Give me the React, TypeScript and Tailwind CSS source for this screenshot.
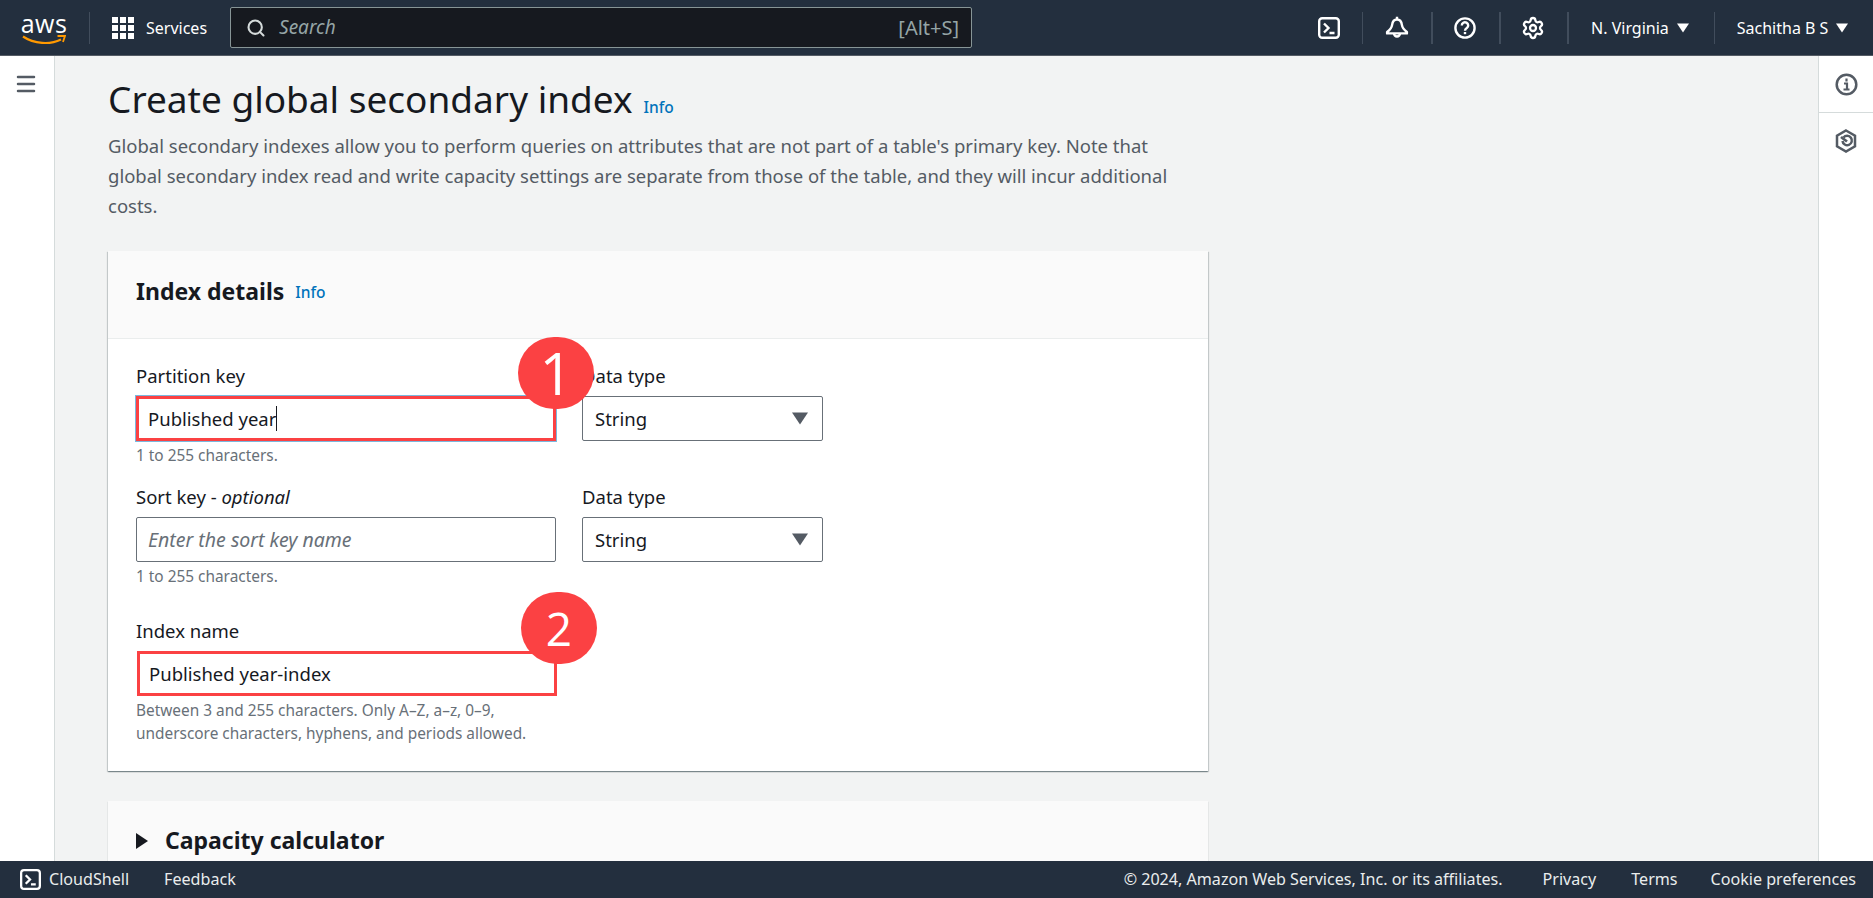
import type { ReactNode } from 'react'
import { Search, Settings, Menu } from 'lucide-react'

const font = { fontFamily: '"Noto Sans", Arial, sans-serif' }

function TerminalIcon({ size = 22 }: { size?: number }) {
  return (
    <svg width={size} height={size} viewBox="0 0 22 22" fill="none" stroke="#fff" strokeWidth="2.4">
      <rect x="1.200" y="1.200" width="19.600" height="19.600" rx="3" />
      <path d="M6 6.500 10.500 11 6 15.500M11.500 16H16.500" />
    </svg>
  )
}

function BellIcon() {
  return (
    <svg width="24" height="24" viewBox="0 0 24 24" fill="none" stroke="#fff" strokeWidth="2.4" strokeLinejoin="round">
      <path d="M12 3.500c-3.200 0-4.500 2.400-4.900 5.400-.4 2.800-1.900 4.900-5 7.100v1.400h19.800V16c-3.100-2.200-4.600-4.300-5-7.100-.4-3-1.700-5.400-4.900-5.400Z" />
      <path d="M12 .8v2.700M9 17.500a3 3 0 0 0 6 0" />
    </svg>
  )
}

function HelpIcon() {
  return (
    <svg width="22" height="22" viewBox="0 0 22 22" fill="none" stroke="#fff" strokeWidth="2.4">
      <circle cx="11" cy="11" r="9.600" />
      <path d="M7.800 8.500a3.200 3.200 0 1 1 5 2.600c-1.200.8-1.800 1.300-1.800 2.700" />
      <path d="M11 15v2.200" />
    </svg>
  )
}

function Caret() {
  return (
    <svg width="14" height="10" viewBox="0 0 14 10" fill="#fff">
      <path d="M1 0.500h12L7 9.500Z" />
    </svg>
  )
}

function AwsLogo() {
  return (
    <div className="flex h-[34px] w-[44px] flex-col items-center">
      <span
        className="text-[25px] leading-[24px] tracking-[0.5px] text-white"
        style={{ fontFamily: '"Open Sans", sans-serif' }}
      >
        aws
      </span>
      <svg width="44" height="10" viewBox="0 0 44 10" fill="none">
        <path d="M1 1.500c11 7.500 27 8.500 38 3" stroke="#f90" strokeWidth="2.200" />
        <path d="M35.500 1 43 .8l-2 6.200" stroke="#f90" strokeWidth="1.800" />
      </svg>
    </div>
  )
}

function Divider({ className }: { className: string }) {
  return <div className={`h-[32px] bg-[#414d5c] ${className}`} />
}

function Header() {
  return (
    <header className="flex h-[56px] shrink-0 items-center border-b border-[#545b64] bg-[#232f3e] pl-[22px] text-white">
      <AwsLogo />
      <Divider className="ml-[23px] w-px" />
      <div className="ml-[22px] grid grid-cols-3 gap-[2px]">
        {Array.from({ length: 9 }).map((_, i) => (
          <div key={i} className="h-[6px] w-[6px] bg-white" />
        ))}
      </div>
      <span className="ml-[12px] text-[16px]">Services</span>
      <div className="ml-[23px] flex h-[41px] w-[742px] items-center rounded-[2px] border border-[#879596] bg-[#16191f] pl-[15px] pr-[12px]">
        <Search size={20} color="#d5dbdb" strokeWidth={2.500} />
        <span className="ml-[13px] text-[19px] italic text-[#95a5a6]">Search</span>
        <span className="ml-auto text-[20px] text-[#95a5a6]">[Alt+S]</span>
      </div>
      <div className="ml-[346px] flex items-center">
        <TerminalIcon />
        <Divider className="ml-[22px] w-px" />
        <div className="ml-[22px]">
          <BellIcon />
        </div>
        <Divider className="ml-[22px] w-[2px]" />
        <div className="ml-[21px]">
          <HelpIcon />
        </div>
        <Divider className="ml-[23px] w-[2px]" />
        <div className="ml-[20px]">
          <Settings size={24} color="#fff" strokeWidth={2.300} />
        </div>
        <Divider className="ml-[22px] w-[2px]" />
        <span className="ml-[22px] text-[16px]">N. Virginia</span>
        <div className="ml-[7px]">
          <Caret />
        </div>
        <Divider className="ml-[24px] w-px" />
        <span className="ml-[22px] text-[16px]">Sachitha B S</span>
        <div className="ml-[7px]">
          <Caret />
        </div>
      </div>
    </header>
  )
}

function Field({
  label,
  value,
  placeholder,
  hint,
  highlighted,
  cursor,
  className = '',
}: {
  label: ReactNode
  value?: string
  placeholder?: string
  hint: ReactNode
  highlighted?: boolean
  cursor?: boolean
  className?: string
}) {
  return (
    <div className="w-[420px]">
      <div className="text-[18.500px] leading-[25px] text-[#16191f]">{label}</div>
      <div
        className={`mt-[8px] flex h-[45px] items-center text-[18.500px] ${
          highlighted ? 'border-[3px] border-[#fb4143] pl-[9px]' : 'rounded-[2px] border border-[#687078] pl-[11px]'
        } ${className}`}
      >
        {value && <span className="text-[#16191f]">{value}</span>}
        {cursor && <span className="h-[25px] w-px bg-[#16191f]" />}
        {placeholder && <span className="text-[19.500px] italic text-[#687078]">{placeholder}</span>}
      </div>
      <div className="mt-[3px] text-[15.400px] leading-[23px] text-[#687078]">{hint}</div>
    </div>
  )
}

function SelectField() {
  return (
    <div className="ml-[26px] w-[241px]">
      <div className="text-[18.500px] leading-[25px] text-[#16191f]">Data type</div>
      <div className="mt-[8px] flex h-[45px] items-center justify-between rounded-[2px] border border-[#687078] pl-[12px] pr-[14px] text-[18.500px] text-[#16191f]">
        String
        <svg width="16" height="13" viewBox="0 0 16 13" fill="#545b64">
          <path d="M0 0.500h16L8 12.500Z" />
        </svg>
      </div>
    </div>
  )
}

function Badge({ children, className }: { children: ReactNode; className: string }) {
  return (
    <div
      className={`absolute flex h-[72px] w-[76px] items-center justify-center rounded-full bg-[#fb4143] leading-none text-white ${className}`}
      style={{ fontFamily: '"Open Sans", sans-serif' }}
    >
      {children}
    </div>
  )
}

function IndexCard() {
  return (
    <section className="relative w-[1100px] bg-white shadow-[0_1px_1px_0_rgba(0,28,36,0.3),1px_1px_1px_0_rgba(0,28,36,0.15),-1px_1px_1px_0_rgba(0,28,36,0.15)]">
      <div className="flex h-[88px] items-center border-b border-[#eaeded] bg-[#fafafa] pb-[7px] pl-[28px]">
        <h2 className="text-[23px] font-bold text-[#16191f]">Index details</h2>
        <a className="ml-[11px] mt-[3px] text-[15.500px] font-medium text-[#0073bb]">Info</a>
      </div>
      <div className="px-[28px] pb-[26px] pt-[24px]">
        <div className="flex">
          <Field
            label="Partition key"
            value="Published year"
            hint="1 to 255 characters."
            highlighted
            cursor
            className="shadow-[0_0_0_1px_#7ab8de]"
          />
          <SelectField />
        </div>
        <div className="mt-[17px] flex">
          <Field
            label={
              <>
                Sort key - <i>optional</i>
              </>
            }
            placeholder="Enter the sort key name"
            hint="1 to 255 characters."
          />
          <SelectField />
        </div>
        <div className="mt-[30px]">
          <Field
            label="Index name"
            value="Published year-index"
            hint={
              <>
                Between 3 and 255 characters. Only A–Z, a–z, 0–9,
                <br />
                underscore characters, hyphens, and periods allowed.
              </>
            }
            highlighted
            className="ml-px w-[420px] pl-[7px]"
          />
        </div>
      </div>
      <Badge className="left-[410px] top-[86px] text-[58px]">1</Badge>
      <Badge className="left-[413px] top-[341px] text-[46px]">2</Badge>
    </section>
  )
}

export default function App() {
  return (
    <div className="flex h-[898px] w-[1873px] flex-col overflow-hidden" style={font}>
      <Header />
      <div className="flex min-h-0 flex-1">
        <aside className="w-[55px] shrink-0 border-r border-[#d5dbdb] bg-white pl-[14px] pt-[16px]">
          <Menu size={24} color="#545b64" strokeWidth={2.500} />
        </aside>
        <main className="min-w-0 flex-1 overflow-hidden bg-[#f2f3f3] pl-[53px]">
          <div className="mt-[23px] flex items-baseline">
            <h1 className="text-[37px] font-normal leading-[40px] text-[#16191f]">Create global secondary index</h1>
            <a className="ml-[11px] text-[15.500px] font-medium text-[#0073bb]">Info</a>
          </div>
          <p className="mt-[12px] w-[1090px] text-[18.500px] leading-[30px] text-[#545b64]">
            Global secondary indexes allow you to perform queries on attributes that are not part of a table's primary
            key. Note that global secondary index read and write capacity settings are separate from those of the table,
            and they will incur additional costs.
          </p>
          <div className="mt-[30px]">
            <IndexCard />
          </div>
          <section className="mt-[30px] flex h-[80px] w-[1100px] items-start bg-[#fafafa] pl-[28px] pt-[22px] shadow-[0_1px_1px_0_rgba(0,28,36,0.3)]">
            <svg className="mt-[10px]" width="12" height="16" viewBox="0 0 12 16" fill="#16191f">
              <path d="M0 0l12 8-12 8Z" />
            </svg>
            <h2 className="ml-[17px] text-[23px] font-bold text-[#16191f]">Capacity calculator</h2>
          </section>
        </main>
        <aside className="w-[55px] shrink-0 border-l border-[#d5dbdb] bg-white">
          <div className="flex h-[57px] items-center justify-center border-b border-[#d5dbdb]">
            <svg width="23" height="23" viewBox="0 0 23 23" fill="none" stroke="#545b64" strokeWidth="2.500">
              <circle cx="11.500" cy="11.500" r="9.800" />
              <path d="M11.500 5.500v3M9 10.500h3v6M8.500 16.500h6" strokeWidth="2.200" />
            </svg>
          </div>
          <div className="flex h-[56px] items-center justify-center">
            <svg width="22" height="24" viewBox="0 0 22 24" fill="none" stroke="#545b64" strokeWidth="2.500">
              <path d="M11 1.500 20 6.700v10.600l-9 5.200-9-5.200V6.700Z" />
              <path d="M8.500 8.500a4.700 4.700 0 1 1-1 3.500" />
              <path d="M6 8l6 4.500" strokeWidth="2.800" />
            </svg>
          </div>
        </aside>
      </div>
      <footer className="flex h-[37px] shrink-0 items-center bg-[#232f3e] pl-[20px] pr-[17px] text-[16.100px] text-[#eaeded]">
        <TerminalIcon size={21} />
        <span className="ml-[8px]">CloudShell</span>
        <span className="ml-[35px]">Feedback</span>
        <span className="ml-auto">© 2024, Amazon Web Services, Inc. or its affiliates.</span>
        <span className="ml-[40px]">Privacy</span>
        <span className="ml-[35px]">Terms</span>
        <span className="ml-[33px]">Cookie preferences</span>
      </footer>
    </div>
  )
}
